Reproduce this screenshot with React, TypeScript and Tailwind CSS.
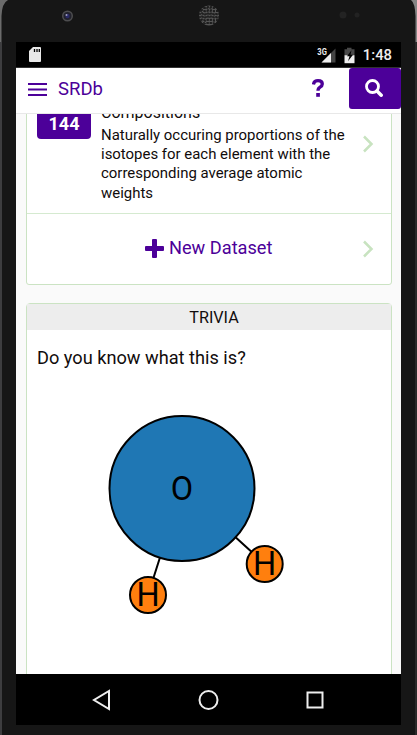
import React from 'react';

interface AtomProps {
  x: number;
  y: number;
  r: number;
  fill: string;
  label: string;
}

const Atom = ({ x, y, r, fill, label }: AtomProps) => (
  <g>
    <circle cx={x} cy={y} r={r} fill={fill} stroke="#000" strokeWidth="2" />
    <text x={x} y={y + 11} textAnchor="middle" fontSize="32.500" fill="#000">
      {label}
    </text>
  </g>
);

const ChevronIcon = () => (
  <svg viewBox="0 0 12 18" className="h-[18px] w-3 shrink-0" fill="none" stroke="#c8e3c0" strokeWidth="2.5">
    <path d="M1 1.5 8.500 9 1 16.500" />
  </svg>
);

// Camera, speaker grille and sensors above the screen
const PhoneTop = () => (
  <svg viewBox="0 0 417 42" className="block h-[42px] w-full shrink-0">
    <path d="M0 0h8Q2 3 1.500 16V42H0z" fill="#6b6b6b" />
    <path d="M417 0h-6q4 3 4.500 16V42h1.500z" fill="#858585" />
    <circle cx="67.500" cy="16" r="5.500" fill="#4d4d4f" />
    <circle cx="67.500" cy="16" r="4" fill="#22222c" />
    <circle cx="67.500" cy="16" r="2.200" fill="#292966" />
    <circle cx="66.500" cy="15" r="1" fill="#a0a0bd" />
    <circle cx="209" cy="15.500" r="10" fill="#555" />
    <g stroke="#1b1b1b" strokeWidth="1.600" strokeDasharray="2 1.200">
      <path d="M203 8h12M200 11h18M199 14h20M199 17h20M200 20h18M203 23h12" />
      <path d="M202 9v13M205 7v17M208 6v19M211 6v19M214 7v17M217 10v11" />
    </g>
    <circle cx="343" cy="15" r="3.500" fill="#232323" />
    <circle cx="357" cy="15" r="2.500" fill="#222" />
  </svg>
);

const StatusBar = () => (
  <div className="flex h-[26px] shrink-0 items-center border-b border-[#333] bg-black pl-[13px] pr-[9px] text-white">
    <svg viewBox="0 0 12 15" className="h-[15px] w-3">
      <path d="M4 0h7q1 0 1 1v13q0 1-1 1H1q-1 0-1-1V4z" fill="#e8e8e8" />
      <path d="M5.500 2v3M8 2v3M10.300 2v3" stroke="#000" strokeWidth="1.300" />
    </svg>
    <svg viewBox="0 0 40 18" className="ml-auto h-[18px] w-10">
      <text x="1.300" y="9" fontSize="9.500" fontWeight="700" fill="#eee" textLength="9.500" lengthAdjust="spacingAndGlyphs">3G</text>
      <path d="M19.500 2.500v14H5.500z" fill="#444" />
      <path d="M15 7v9.500H5.500z" fill="#eee" />
      <path d="M28.500 3.200H31V1.700h4.500v1.500h3v6h-10z" fill="#484848" />
      <path d="M28.500 9.200h10v8h-10z" fill="#eee" />
      <path d="m35.500 4.200-4.500 6h2.500l-1.500 5 5-6.500h-2.500z" fill="#000" />
    </svg>
    <span className="ml-[7px] pt-px text-[14.800px] font-medium leading-[26px] text-[#eee]">1:48</span>
  </div>
);

const AppBar = () => (
  <div className="flex h-[46px] shrink-0 items-start border-b border-[#e8e8e8] bg-white text-[#4c0099]">
    <svg viewBox="0 0 19 14" className="ml-3 mt-[15px] h-[14px] w-[19px]" stroke="currentColor" strokeWidth="2">
      <path d="M0 1h19M0 6.500h19M0 12h19" />
    </svg>
    <h1 className="ml-[11px] text-[18.500px] leading-[42px]">SRDb</h1>
    <svg viewBox="0 0 12 18" className="ml-auto mt-[11px] h-[18px] w-3">
      <path d="M1.400 5.500Q2 1.700 6 1.700q4.300 0 4.300 3.400 0 1.800-2.200 3.100Q6 9.400 6 11.800" fill="none" stroke="currentColor" strokeWidth="3.300" />
      <path d="M4.200 14h3.700v3.800H4.200z" fill="currentColor" />
    </svg>
    <button className="ml-[25px] flex h-[41px] w-[52px] items-center justify-center rounded-[3px] bg-[#4c0099] pb-0.5 pr-0.5 text-white">
      <svg viewBox="0 0 18 18" className="h-[18px] w-[18px]" fill="none" stroke="currentColor">
        <circle cx="7.500" cy="7.500" r="6" strokeWidth="2.800" />
        <path d="m12 12 4.200 4.200" strokeWidth="3.500" strokeLinecap="round" />
      </svg>
    </button>
  </div>
);

const DatasetCard = () => (
  <section className="-mt-3 shrink-0 rounded-[3px] border border-[#cbe3c3] bg-white">
    <div className="flex h-[111px] border-b border-[#d5ead0] pl-[10px] pr-4">
      <div className="flex h-9 w-[54px] shrink-0 items-end justify-center rounded-[4px] bg-[#4c0099] pb-[5px] text-[18px] font-bold leading-[21px] text-white">
        144
      </div>
      <div className="ml-[10px] w-[250px] shrink-0">
        <h2 className="text-[16px] leading-5">Compositions</h2>
        <p className="mt-[3px] text-[14.950px] leading-[19.200px]">
          Naturally occuring proportions of the isotopes for each element with the corresponding average atomic weights
        </p>
      </div>
      <div className="ml-auto mt-8">
        <ChevronIcon />
      </div>
    </div>
    <div className="flex h-[70px] items-center pb-[2px] pl-[118px] pr-4 text-[#4c0099]">
      <svg viewBox="0 0 19 19" className="h-[19px] w-[19px]" fill="currentColor">
        <path d="M8 0h3q1 0 1 1v6h6q1 0 1 1v3q0 1-1 1h-6v6q0 1-1 1H8q-1 0-1-1v-6H1q-1 0-1-1V8q0-1 1-1h6V1q0-1 1-1z" />
      </svg>
      <span className="ml-[5px] text-[18.200px] leading-6">New Dataset</span>
      <div className="ml-auto pt-px">
        <ChevronIcon />
      </div>
    </div>
  </section>
);

const TriviaCard = () => (
  <section className="mt-[18px] h-[400px] shrink-0 rounded-[4px] border border-[#cbe3c3] bg-white">
    <h2 className="h-[26px] bg-[#ededed] pl-[10px] text-center text-[16.200px] leading-[28px]">TRIVIA</h2>
    <p className="pl-[10px] pt-4 text-[18.200px] leading-6">Do you know what this is?</p>
    {/* Water molecule */}
    <svg viewBox="90 400 210 230" className="ml-[63px] mt-[30px] h-[230px] w-[210px]">
      <path d="m182 488.500 83 75.500M182 488.500 148 595" stroke="#000" strokeWidth="2" />
      <Atom x={182} y={488.5} r={72.5} fill="#1f77b4" label="O" />
      <Atom x={264.7} y={564} r={18} fill="#ff7f0e" label="H" />
      <Atom x={148} y={595} r={18} fill="#ff7f0e" label="H" />
    </svg>
  </section>
);

const NavBar = () => (
  <div className="flex h-[51px] shrink-0 items-center justify-between bg-black pl-[76px] pr-[76px]">
    <svg viewBox="0 0 20 22" className="h-[22px] w-5" fill="none" stroke="#eee" strokeWidth="2">
      <path d="M17 2v18L2 11z" />
    </svg>
    <svg viewBox="0 0 22 22" className="h-[22px] w-[22px]" fill="none" stroke="#eee" strokeWidth="2">
      <circle cx="10.500" cy="11" r="9" />
    </svg>
    <svg viewBox="0 0 20 20" className="h-5 w-5" fill="none" stroke="#eee" strokeWidth="2">
      <path d="M2.500 2.500h15v15h-15z" />
    </svg>
  </div>
);

const App = () => {
  return (
    <div className="flex h-[735px] w-[417px] flex-col overflow-hidden bg-[#161616] font-[Roboto,sans-serif] text-[#110c0c]">
      <PhoneTop />
      <div className="flex h-[693px] border-l-2 border-r-2 border-l-[#3d3d3f] border-r-[#292929] px-[14px]">
        <div className="flex h-[683px] w-[385px] shrink-0 flex-col">
          <StatusBar />
          <AppBar />
          <main className="flex min-h-0 flex-1 flex-col overflow-hidden bg-[#fafafa] pl-[10px] pr-[9px]">
            <DatasetCard />
            <TriviaCard />
          </main>
          <NavBar />
        </div>
      </div>
    </div>
  );
};

export default App;
